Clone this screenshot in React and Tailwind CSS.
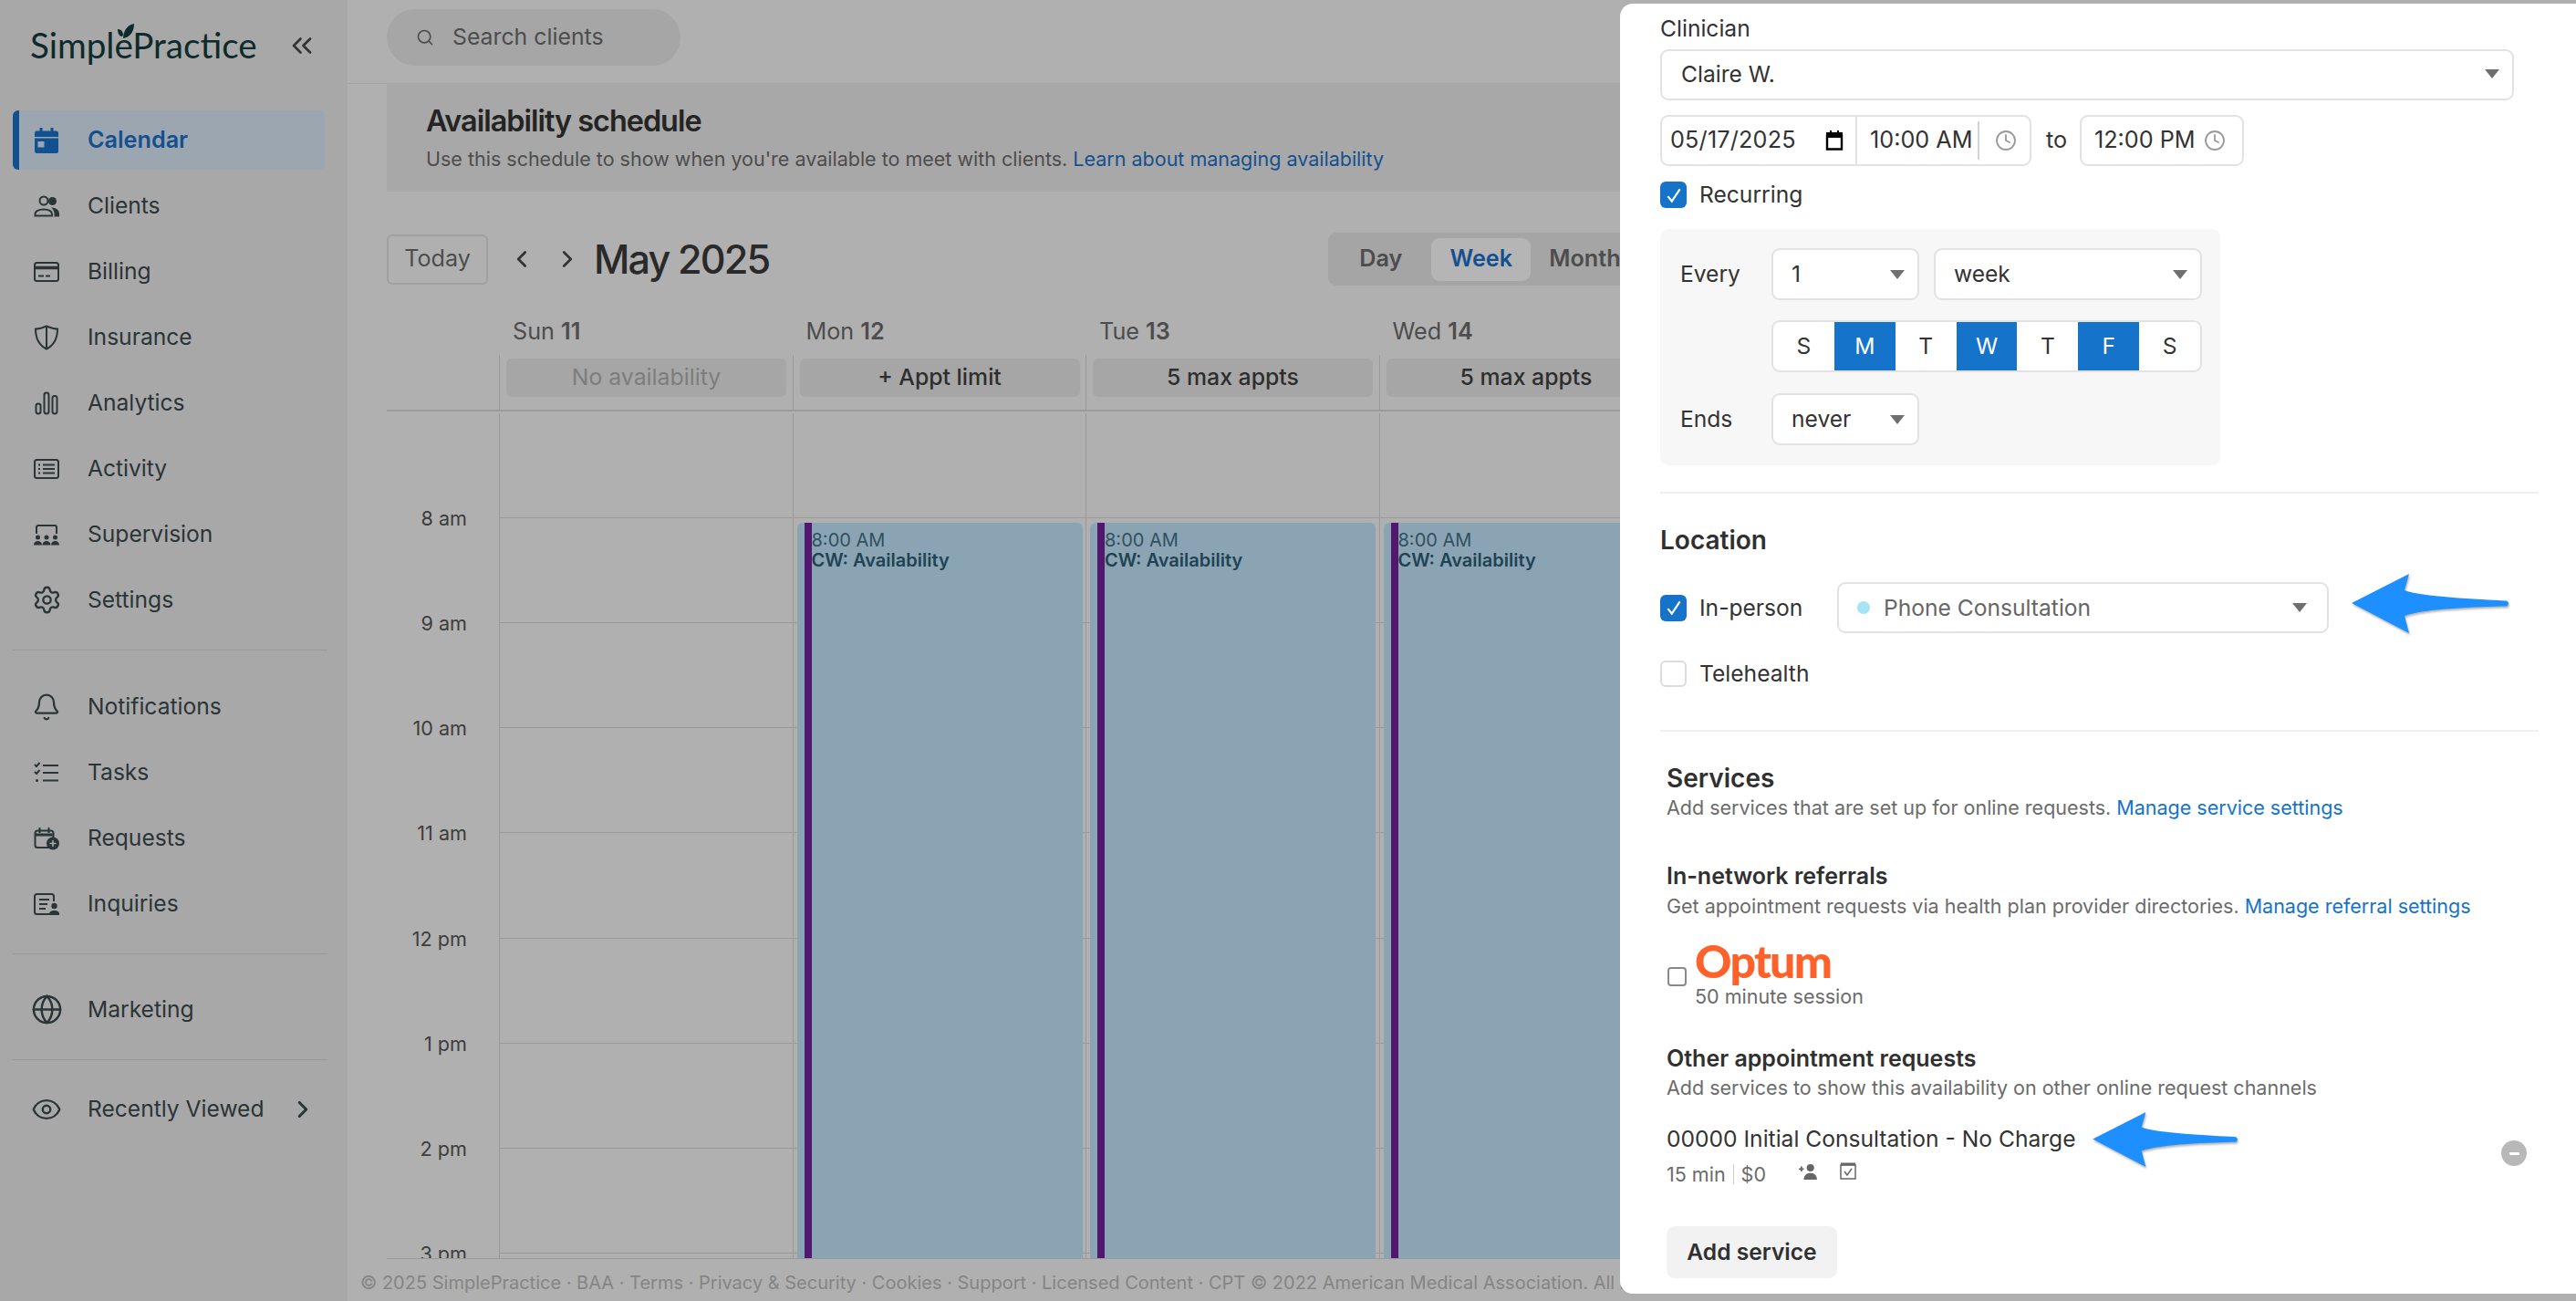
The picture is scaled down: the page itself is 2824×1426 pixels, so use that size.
import React from 'react';
import { Bell, ChevronLeft, ChevronRight, ChevronsLeft, Clock, Eye, Globe, Search, Settings } from 'lucide-react';

const box = 'border-2 border-[#e2e2e2] bg-white rounded-[9px]';
const heading = 'font-semibold text-[28px] text-[#303030]';
const subText = 'text-[21.5px] leading-[28px] h-[28px] text-[#6b6b6b] whitespace-nowrap';
const subHeading = 'font-semibold text-[25px] leading-[34px] h-[34px] text-[#303030]';
const link = 'text-[#1573c9]';

// Icônes de la barre latérale, dessinées sur une grille 28x28
const Glyph = ({ children, className = 'text-[#2b3437]' }) => (
  <svg viewBox="0 0 28 28" fill="none" stroke="currentColor" strokeWidth="2" className={`w-[28px] h-[28px] shrink-0 ${className}`}>
    {children}
  </svg>
);

const CalendarIcon = () => (
  <Glyph className="text-[#12508f]">
    <path stroke="none" fill="currentColor" fillRule="evenodd" d="M6.500 0h3v3.500h9V0h3v3.500h3A2.500 2.500 0 0 1 27 6v4H1V6a2.500 2.500 0 0 1 2.500-2.500h3zM1 11.500h26V25.500a2.500 2.500 0 0 1-2.500 2.500h-21A2.500 2.500 0 0 1 1 25.500zM4.500 15v6.500h7V15z" />
  </Glyph>
);
const ClientsIcon = () => (
  <Glyph>
    <circle cx="11" cy="8" r="4.500" />
    <path d="M1.500 24.500V23c0-3.500 4-5.500 9.500-5.500s9 2 9 5.500v1.500z" />
    <circle cx="20.500" cy="8.500" r="4.500" fill="currentColor" stroke="none" />
    <path stroke="none" fill="currentColor" d="M19 15.500c5 0 9 2.500 9 7V25.500h-5.500V22c0-2.500-1.500-5-3.500-6.500z" />
  </Glyph>
);
const BillingIcon = () => (
  <Glyph>
    <rect x="1" y="4" width="26" height="20" rx="2.500" />
    <path strokeWidth="3.500" d="M1 9.500h26" />
    <path d="M5 18.500h6M13 18.500h5" />
  </Glyph>
);
const InsuranceIcon = () => (
  <Glyph>
    <path d="M14 1.500C10.500 3 6.500 4.500 2 4.500c0 10 4 18 12 22 8-4 12-12 12-22-4.500 0-8.500-1.500-12-3zM14 1.500v25" />
  </Glyph>
);
const AnalyticsIcon = () => (
  <Glyph>
    <rect x="2.500" y="14.500" width="5" height="11" rx="2.400" />
    <rect x="11.500" y="2.500" width="5" height="23" rx="2.400" />
    <rect x="20.500" y="6" width="5" height="19.500" rx="2.400" />
  </Glyph>
);
const ActivityIcon = () => (
  <Glyph>
    <rect x="1" y="4" width="26" height="20" rx="2.500" />
    <path d="M5 9.500h2M5 14h2M5 18.500h2M10 9.500h13M10 14h13M10 18.500h13" />
  </Glyph>
);
const SupervisionIcon = () => (
  <Glyph>
    <path d="M3 13V6a2 2 0 0 1 2-2h18a2 2 0 0 1 2 2v7" />
    <g stroke="none" fill="currentColor">
      <circle cx="4.500" cy="17" r="2.500" /><circle cx="14" cy="17" r="2.500" /><circle cx="23.500" cy="17" r="2.500" />
      <path d="M0 25.500c0-3 2-4.500 4.500-4.500S9 22.500 9 25.500zM9.500 25.500c0-3 2-4.500 4.500-4.500s4.500 1.500 4.500 4.500zM19 25.500c0-3 2-4.500 4.500-4.500S28 22.500 28 25.500z" />
    </g>
  </Glyph>
);
const TasksIcon = () => (
  <Glyph>
    <path d="M1 5l2 2 3.500-4M1 13l2 2 3.500-4M10 6h17M10 14h17M10 22.500h17" />
    <circle cx="3.500" cy="22.500" r="1.500" fill="currentColor" stroke="none" />
  </Glyph>
);
const RequestsIcon = () => (
  <Glyph>
    <path d="M17 24H4a2.500 2.500 0 0 1-2.500-2.500V8A2.500 2.500 0 0 1 4 5.500h15A2.500 2.500 0 0 1 21.500 8v5M6.500 2v6M16.500 2v6" />
    <path strokeWidth="3" d="M2 10h19" />
    <circle cx="21" cy="19.500" r="7" fill="currentColor" stroke="none" />
    <path stroke="#a8a8a8" strokeWidth="1.600" d="M21 16v7M17.500 19.500h7" />
  </Glyph>
);
const InquiriesIcon = () => (
  <Glyph>
    <path d="M18 25H3.500A2.500 2.500 0 0 1 1 22.500v-17A2.500 2.500 0 0 1 3.500 3h16A2.500 2.500 0 0 1 22 5.500V11M6 9h11M6 14h9M6 19h7" />
    <circle cx="22.500" cy="16" r="3.200" fill="currentColor" stroke="none" />
    <path stroke="none" fill="currentColor" d="M17 26v-1.500c0-2 2.500-3.500 5.500-3.500s5.500 1.500 5.500 3.500V26z" />
  </Glyph>
);

const mainNav = [
  ['Clients', ClientsIcon], ['Billing', BillingIcon], ['Insurance', InsuranceIcon], ['Analytics', AnalyticsIcon],
  ['Activity', ActivityIcon], ['Supervision', SupervisionIcon],
];
const secondNav = [['Tasks', TasksIcon], ['Requests', RequestsIcon], ['Inquiries', InquiriesIcon]];

function NavItem({ label, icon }) {
  return (
    <div className="flex items-center h-[65px] pl-[23px] gap-[31px] text-[24.6px] text-[#2b3437]">
      <span className="flex justify-center w-[28px]">{icon}</span>
      <span>{label}</span>
    </div>
  );
}

function Sidebar() {
  const lucideIcon = 'text-[#2b3437] shrink-0';
  return (
    <aside className="w-[381px] shrink-0 bg-[#a8a8a8] px-[14px]">
      <div className="flex items-center h-[121px] pb-[22px] pl-[19px]">
        <div className="relative font-['Lato',sans-serif] text-[38.6px] text-[#0e2b2b]">
          SimplePractice
          <svg viewBox="0 0 18 16" className="absolute left-[96px] top-[5px] w-[18px] h-[16px]">
            <path fill="#0e2b2b" d="M6 16C6 9 10 1 18 0c0 8-4 15-12 16zM5 14C1 14 0 9 0 6c3 0 6 2 6 6z" />
          </svg>
        </div>
        <ChevronsLeft className="w-[36px] h-[36px] ml-[31px] text-[#333]" strokeWidth={1.800} />
      </div>

      <div className="flex flex-col gap-[7px]">
        <div className="flex items-center w-[342px] h-[65px] pl-[16px] gap-[31px] bg-[#9ba6b0] border-l-[7px] border-[#12508f] rounded-[6px] text-[25.2px] font-semibold text-[#14508f]">
          <span className="flex justify-center w-[28px]"><CalendarIcon /></span>
          <span>Calendar</span>
        </div>
        {mainNav.map(([label, Icon]) => <NavItem key={label} label={label} icon={<Icon />} />)}
        <NavItem label="Settings" icon={<Settings className={`w-[33px] h-[33px] ${lucideIcon}`} strokeWidth={1.700} />} />
      </div>

      <div className="mt-[22px] w-[345px] border-t border-[#999]" />

      <div className="flex flex-col gap-[7px] mt-[29px]">
        <NavItem label="Notifications" icon={<Bell className={`w-[32px] h-[32px] ${lucideIcon}`} strokeWidth={1.700} />} />
        {secondNav.map(([label, Icon]) => <NavItem key={label} label={label} icon={<Icon />} />)}
      </div>

      <div className="mt-[22px] w-[345px] border-t border-[#999]" />
      <div className="mt-[28px]"><NavItem label="Marketing" icon={<Globe className={`w-[35px] h-[35px] ${lucideIcon}`} strokeWidth={1.700} />} /></div>
      <div className="mt-[22px] w-[345px] border-t border-[#999]" />

      <div className="flex items-center mt-[21px] pr-[12px]">
        <NavItem label="Recently Viewed" icon={<Eye className={`w-[34px] h-[34px] ${lucideIcon}`} strokeWidth={1.700} />} />
        <ChevronRight className="ml-[28px] w-[30px] h-[30px] text-[#2b3437]" strokeWidth={2.500} />
      </div>
    </aside>
  );
}

const days = [
  { name: 'Sun', num: '11', pill: 'No availability', muted: true },
  { name: 'Mon', num: '12', pill: '+ Appt limit', event: true },
  { name: 'Tue', num: '13', pill: '5 max appts', event: true },
  { name: 'Wed', num: '14', pill: '5 max appts', event: true },
];
const hours = ['8 am', '9 am', '10 am', '11 am', '12 pm', '1 pm', '2 pm', '3 pm'];

function DayColumn({ day }) {
  return (
    <div className="relative w-[321.5px] shrink-0 border-l border-[#9a9a9a]">
      <div className="h-[115px] border-b border-[#9a9a9a]" />
      {hours.map((h) => <div key={h} className="h-[115.15px] border-b border-[#9a9a9a]" />)}
      {day.event && (
        <div className="absolute left-[4px] top-[120px] bottom-0 w-[313px] flex rounded-t-[6px] bg-[#8aa4b3] pl-[8px]">
          <div className="w-[8px] bg-[#52186f] shrink-0" />
          <div className="pt-[8px] text-[20px] leading-[22px] text-[#31505f]">
            <div>8:00 AM</div>
            <div className="font-semibold text-[#1f4354]">CW: Availability</div>
          </div>
        </div>
      )}
    </div>
  );
}

function Main() {
  return (
    <main className="flex-1 min-w-0 flex flex-col overflow-hidden">
      <div className="h-[92px] shrink-0 flex items-center pl-[43px] pb-[10px] border-b border-[#a4a4a4]">
        <div className="flex items-center w-[322px] h-[62px] rounded-full bg-[#a6a6a6] pl-[32px] gap-[20px] text-[24.8px] text-[#4d4d4d]">
          <Search className="w-[20px] h-[20px]" strokeWidth={2} />
          <span>Search clients</span>
        </div>
      </div>

      <div className="ml-[43px] h-[118px] shrink-0 bg-[#a8a8a8] pl-[43px] pt-[21px]">
        <div className="font-semibold text-[32.4px] leading-[40px] tracking-[-1px] text-[#242424]">Availability schedule</div>
        <div className="mt-[7px] text-[21.5px] leading-[28px] text-[#4d4d4d]">
          Use this schedule to show when you're available to meet with clients. <span className="text-[#14508f]">Learn about managing availability</span>
        </div>
      </div>

      <div className="ml-[43px] mt-[45px] h-[58px] shrink-0 flex items-center">
        <div className="flex items-center justify-center w-[111px] h-[55px] rounded-[6px] border-2 border-[#a0a0a0] text-[25.2px] text-[#4d4d4d]">Today</div>
        <ChevronLeft className="ml-[22px] w-[30px] h-[30px] text-[#333]" strokeWidth={2.200} />
        <ChevronRight className="ml-[20px] w-[30px] h-[30px] text-[#333]" strokeWidth={2.200} />
        <div className="ml-[14px] text-[43.2px] text-[#2a2a2a] font-medium tracking-[-1.9px]">May 2025</div>
        <div className="ml-[613px] flex items-center h-[58px] w-[400px] rounded-[9px] bg-[#a5a5a5] pl-[34px] font-semibold text-[25.2px] text-[#4d4d4d]">
          <span>Day</span>
          <span className="ml-[32px] flex items-center justify-center w-[109px] h-[47px] rounded-[9px] bg-[#b5b5b5] text-[#14508f]">Week</span>
          <span className="ml-[20px]">Month</span>
        </div>
      </div>

      <div className="ml-[43px] flex pl-[123px] h-[76px] shrink-0">
        {days.map((d) => (
          <div key={d.name} className="w-[321.5px] pl-[15px] pt-[34px] text-[25.2px] leading-[32px] text-[#4d4d4d]">
            {d.name} <span className="font-semibold">{d.num}</span>
          </div>
        ))}
      </div>

      <div className="ml-[43px] flex pl-[123px] h-[62px] shrink-0 border-b-2 border-[#9a9a9a]">
        {days.map((d) => (
          <div key={d.name} className="w-[321.5px] border-l border-[#9a9a9a] pt-[4px] pl-[7px]">
            <div className={`flex items-center justify-center w-[307px] h-[42px] rounded-[6px] bg-[#a6a6a6] text-[24.8px] ${d.muted ? 'text-[#7d7d7d]' : 'font-medium text-[#2e2e2e]'}`}>{d.pill}</div>
          </div>
        ))}
      </div>

      <div className="ml-[43px] mt-[2px] flex flex-1 min-h-0 overflow-hidden">
        <div className="w-[123px] shrink-0 pr-[35px] pt-[100px] text-right text-[21.6px] leading-[30px] text-[#3d3d3d]">
          {hours.map((h) => <div key={h} className="h-[115.15px]">{h}</div>)}
        </div>
        {days.map((d) => <DayColumn key={d.name} day={d} />)}
      </div>

      <div className="ml-[43px] border-t border-[#9a9a9a] shrink-0" />
      <div className="h-[46px] shrink-0 pl-[14px] pt-[6px] flex items-center whitespace-nowrap text-[20px] text-[#858585]">
        © 2025 SimplePractice · BAA · Terms · Privacy &amp; Security · Cookies · Support · Licensed Content · CPT © 2022 American Medical Association. All rights reserved.
      </div>
    </main>
  );
}

const Caret = ({ className = '' }) => (
  <svg viewBox="0 0 16 10" className={`w-[16px] h-[10px] shrink-0 ${className}`}><path fill="#6f6f6f" d="M0 0h16l-8 10z" /></svg>
);

function Select({ value, className = '', textClass = 'text-[#333]', children }) {
  return (
    <div className={`${box} flex items-center h-[57px] pl-[20px] pr-[14px] text-[24.6px] ${className} ${textClass}`}>
      {children}
      <span className="flex-1">{value}</span>
      <Caret />
    </div>
  );
}

function CheckBox({ checked }) {
  if (!checked) return <div className="w-[29px] h-[29px] rounded-[6px] border-2 border-[#dcdcdc] bg-white shrink-0" />;
  return (
    <div className="flex items-center justify-center w-[29px] h-[29px] rounded-[6px] bg-[#1573c9] shrink-0">
      <svg viewBox="0 0 20 20" className="w-[22px] h-[22px]"><path d="M4 11l4 5 8-12" fill="none" stroke="#fff" strokeWidth="2" /></svg>
    </div>
  );
}

// Flèche d'annotation bleue posée sur la capture
function BlueArrow({ className }) {
  return (
    <svg viewBox="0 0 174 65" className={`absolute drop-shadow-[1px_2px_1px_rgba(0,0,0,0.3)] ${className}`}>
      <path fill="#1e8fff" d="M0 32 63 0 58 18C75 25 140 28 170 29.500Q174 32 170 35.500C140 36 80 38 58 46L63 65Z" />
    </svg>
  );
}

const weekDays = [['S'], ['M', true], ['T'], ['W', true], ['T'], ['F', true], ['S']];

function Drawer() {
  return (
    <div className="absolute right-0 top-[4px] w-[1048px] h-[1414px] rounded-l-[14px] bg-white pl-[44px] text-[#333] text-[24.6px]">
      <div className="mt-[11px] h-[32px] leading-[32px]">Clinician</div>
      <Select value="Claire W." className="mt-[7px] w-[936px] !h-[56px] !pl-[21px] pb-[2px]" />

      <div className="mt-[16px] flex items-center h-[56px] text-[25.2px]">
        <div className="flex items-center w-[214px] h-[56px] pl-[9px] border-2 border-[#e2e2e2] rounded-l-[9px] border-r-0">
          <span className="w-[170px] tracking-[0.2px]">05/17/2025</span>
          <svg viewBox="0 0 20 22" className="w-[20px] h-[22px]">
            <path fill="none" stroke="#000" strokeWidth="2.400" d="M2 6h16v14.500H2z" />
            <path fill="#000" d="M1 2h18v6H1zM5 0h2v3H5zM13 0h2v3h-2z" />
          </svg>
        </div>
        <div className="flex items-center w-[193px] h-[56px] pl-[14px] border-2 border-[#e2e2e2] rounded-r-[9px]">
          <span>10:00 AM</span>
          <span className="ml-[6px] h-[42px] border-l-2 border-[#d4d4d4]" />
          <Clock className="ml-[17px] w-[24px] h-[24px] text-[#999]" strokeWidth={1.800} />
        </div>
        <span className="ml-[16px] w-[37px]">to</span>
        <div className="flex items-center w-[180px] h-[56px] pl-[14px] border-2 border-[#e2e2e2] rounded-[9px]">
          <span>12:00 PM</span>
          <Clock className="ml-[9px] w-[24px] h-[24px] text-[#999]" strokeWidth={1.800} />
        </div>
      </div>

      <div className="mt-[17px] flex items-center gap-[14px] h-[29px]"><CheckBox checked /><span>Recurring</span></div>

      <div className="mt-[23px] w-[614px] h-[259px] rounded-[9px] bg-[#f7f7f7] pt-[21px] pl-[22px]">
        <div className="flex items-center">
          <span className="w-[100px]">Every</span>
          <Select value="1" className="w-[162px]" />
          <Select value="week" className="w-[294px] ml-[16px]" />
        </div>
        <div className="flex mt-[22px] ml-[100px] w-[472px] h-[57px] rounded-[9px] border-2 border-[#e2e2e2] bg-white overflow-hidden">
          {weekDays.map(([d, on], i) => (
            <div key={i} className={`flex flex-1 items-center justify-center ${on ? 'bg-[#1573c9] text-white' : 'text-[#333]'}`}>{d}</div>
          ))}
        </div>
        <div className="flex items-center mt-[23px]">
          <span className="w-[100px]">Ends</span>
          <Select value="never" className="w-[162px]" />
        </div>
      </div>

      <div className="mt-[29px] w-[963px] border-t-2 border-[#f0f0f0]" />

      <div className={`mt-[33px] h-[36px] leading-[36px] ${heading}`}>Location</div>

      <div className="mt-[28px] flex items-center h-[56px]">
        <CheckBox checked />
        <span className="ml-[14px] w-[151px]">In-person</span>
        <Select value="Phone Consultation" className="w-[539px] !h-[56px] !pl-[20px] !pr-[22px]" textClass="text-[#666]">
          <span className="w-[14px] h-[14px] rounded-full bg-[#a5e3f7] mr-[15px]" />
        </Select>
      </div>

      <div className="mt-[30px] flex items-center gap-[14px] h-[29px]"><CheckBox /><span>Telehealth</span></div>

      <div className="mt-[47px] w-[963px] border-t-2 border-[#f0f0f0]" />

      <div className="ml-[7px]">
        <div className={`mt-[33px] h-[36px] leading-[36px] ${heading}`}>Services</div>
        <div className={subText}>Add services that are set up for online requests. <span className={link}>Manage service settings</span></div>

        <div className={`mt-[44px] ${subHeading}`}>In-network referrals</div>
        <div className={`mt-[2px] ${subText}`}>Get appointment requests via health plan provider directories. <span className={link}>Manage referral settings</span></div>

        <div className="mt-[23px] flex">
          <div className="ml-[1px] mt-[30px] w-[21px] h-[21px] rounded-[4px] border-2 border-[#8a8a8a] shrink-0" />
          <div className="ml-[9px]">
            <div className="h-[48px] font-['Lato',sans-serif] font-black text-[50px] leading-[46px] tracking-[-1.7px] text-[#ff612b]">Optum</div>
            <div className={subText}>50 minute session</div>
          </div>
        </div>

        <div className={`mt-[37px] ${subHeading}`}>Other appointment requests</div>
        <div className={`mt-[1px] ${subText}`}>Add services to show this availability on other online request channels</div>

        <div className="mt-[25px] flex items-center justify-between w-[943px]">
          <div>
            <div className="h-[34px] leading-[34px]">00000 Initial Consultation - No Charge</div>
            <div className={`mt-[8px] flex items-center ${subText}`}>
              <span>15 min</span>
              <span className="mx-[8px] h-[22px] border-l border-[#ccc]" />
              <span>$0</span>
              <svg viewBox="0 0 24 20" className="ml-[35px] w-[22px] h-[18px] mb-[6px]" fill="#666">
                <circle cx="15" cy="5.500" r="4.500" /><path d="M7 20c0-5 3-8 8-8s8 3 8 8zM1 6h6v2H1zM3 4h2v6H3z" />
              </svg>
              <svg viewBox="0 0 18 20" className="ml-[24px] w-[18px] h-[20px] mb-[8px]" fill="none" stroke="#666" strokeWidth="1.500">
                <path d="M1 4h16v15H1zM5 11l3 4 5-7" /><path strokeWidth="3" d="M1 3h16" />
              </svg>
            </div>
          </div>
          <div className="flex items-center justify-center w-[28px] h-[28px] rounded-full bg-[#b8b8b8] mb-[4px]">
            <span className="w-[11px] h-[3px] bg-white rounded-[1px]" />
          </div>
        </div>

        <div className="mt-[43px] flex items-center justify-center w-[187px] h-[57px] rounded-[9px] bg-[#f2f2f2] font-semibold text-[#303030]">Add service</div>
      </div>
    </div>
  );
}

export default function App() {
  return (
    <div className="relative flex w-[2824px] h-[1426px] overflow-hidden bg-[#b0b0b0] font-['Inter',sans-serif]">
      <Sidebar />
      <Main />
      <Drawer />
      <BlueArrow className="left-[2578px] top-[629px] w-[174px] h-[65px]" />
      <BlueArrow className="left-[2293px] top-[1219px] w-[163px] h-[60px]" />
    </div>
  );
}
